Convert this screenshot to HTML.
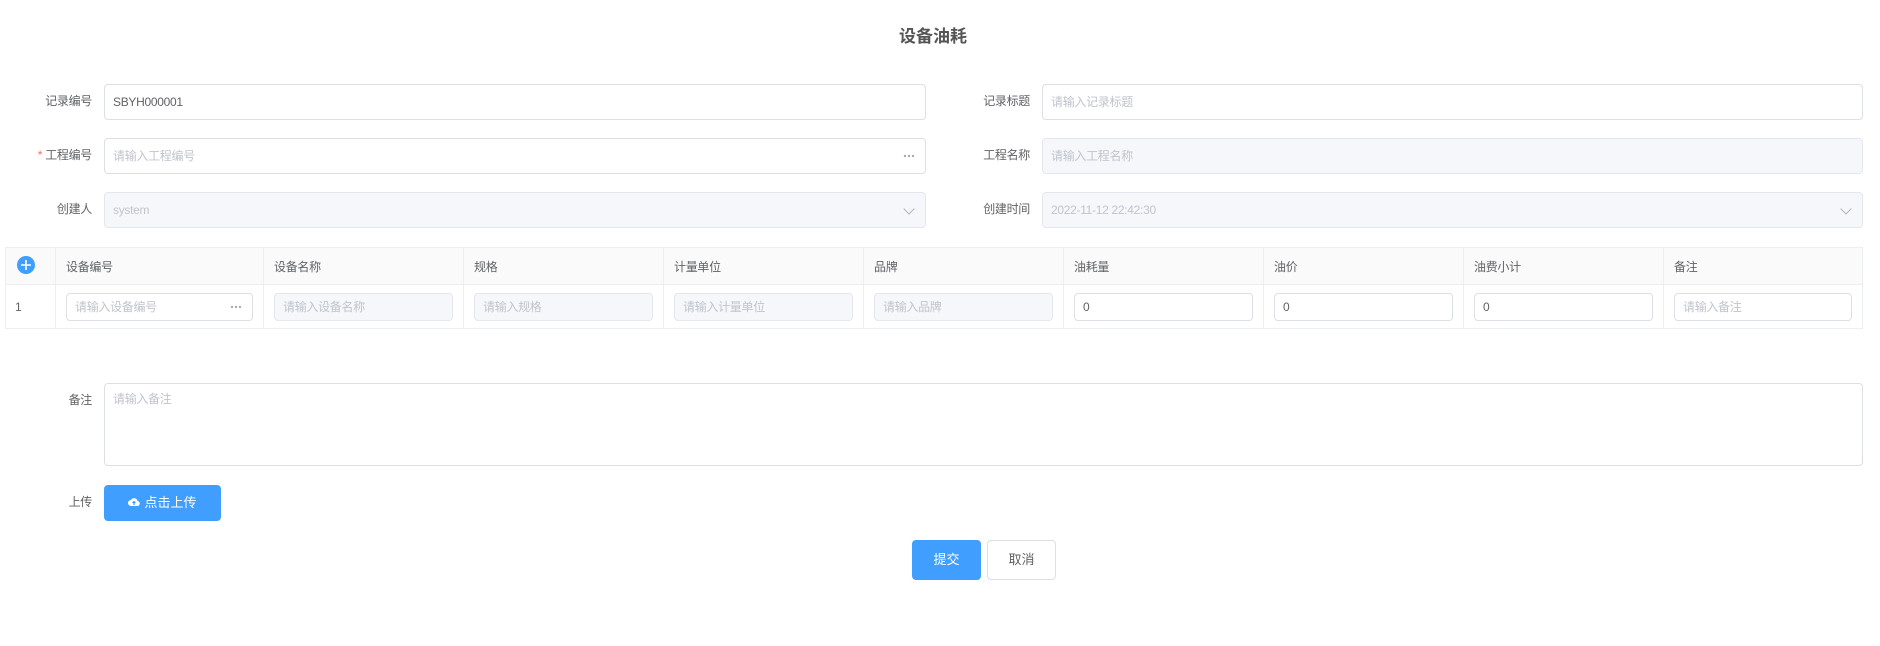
<!DOCTYPE html>
<html><head><meta charset="utf-8"><style>
*{box-sizing:border-box;margin:0;padding:0}
body{width:1880px;height:646px;background:#fff;font-family:"Liberation Sans","Noto Sans CJK SC",sans-serif;color:#606266;position:relative;overflow:hidden;font-size:12px}
.a{position:absolute}
.title{left:0;width:1866px;top:22px;text-align:center;font-size:17px;font-weight:bold;color:#555}
.lbl{text-align:right;width:90px;line-height:35px;font-size:12px;color:#606266;letter-spacing:-0.3px}
.inp{border:1px solid #dcdfe6;border-radius:4px;height:36px;line-height:34px;padding-left:8px;font-size:12px;color:#606266;background:#fff;letter-spacing:-0.3px}
.ph{color:#c0c4cc}
.dis{background:#f5f7fa;border-color:#e4e7ed;color:#c0c4cc}
.dots{position:absolute;right:10px;top:50%;margin-top:-2px;width:12px;height:4px}
.chev{position:absolute;right:12px;top:12px;width:8px;height:8px;border-right:1px solid #b0b3b8;border-bottom:1px solid #b0b3b8;transform:rotate(45deg)}
table{position:absolute;left:5px;top:247px;border-collapse:collapse;table-layout:fixed}
td,th{border:1px solid #ebeef5;font-weight:normal;text-align:left;font-size:12px;color:#606266;letter-spacing:-0.3px}
th{height:37px;background:#fafafa;padding-left:10px}
td{height:44px;padding:0 10px}
.ci{position:relative;height:28px;line-height:26px;border:1px solid #dcdfe6;border-radius:4px;padding-left:8px;background:#fff;font-size:12px}
.ci.dis{background:#f5f7fa;border-color:#e4e7ed}
.btn{border-radius:4px;text-align:center;font-size:13px}
</style></head><body>
<div class="a title">设备油耗</div>

<div class="a lbl" style="left:2px;top:84px">记录编号</div>
<div class="a inp" style="left:104px;top:84px;width:822px">SBYH000001</div>
<div class="a lbl" style="left:2px;top:138px"><span style="color:#f56c6c">*</span> 工程编号</div>
<div class="a inp" style="left:104px;top:138px;width:822px"><span class="ph">请输入工程编号</span><svg class="dots" viewBox="0 0 12 4"><circle cx="2" cy="2" r="1.2" fill="#a8abb2"/><circle cx="6" cy="2" r="1.2" fill="#a8abb2"/><circle cx="10" cy="2" r="1.2" fill="#a8abb2"/></svg></div>
<div class="a lbl" style="left:2px;top:192px">创建人</div>
<div class="a inp dis" style="left:104px;top:192px;width:822px">system<span class="chev"></span></div>

<div class="a lbl" style="left:940px;top:84px">记录标题</div>
<div class="a inp" style="left:1042px;top:84px;width:821px"><span class="ph">请输入记录标题</span></div>
<div class="a lbl" style="left:940px;top:138px">工程名称</div>
<div class="a inp dis" style="left:1042px;top:138px;width:821px">请输入工程名称</div>
<div class="a lbl" style="left:940px;top:192px">创建时间</div>
<div class="a inp dis" style="left:1042px;top:192px;width:821px">2022-11-12 22:42:30<span class="chev"></span></div>

<table>
<colgroup><col style="width:50px"><col style="width:208px"><col style="width:200px"><col style="width:200px"><col style="width:200px"><col style="width:200px"><col style="width:200px"><col style="width:200px"><col style="width:200px"><col style="width:199px"></colgroup>
<tr><th style="padding-left:10px"><svg width="20" height="20" viewBox="0 0 20 20"><circle cx="10" cy="10" r="9" fill="#409eff"/><path d="M10 5v10M5 10h10" stroke="#fff" stroke-width="1.6"/></svg></th><th>设备编号</th><th>设备名称</th><th>规格</th><th>计量单位</th><th>品牌</th><th>油耗量</th><th>油价</th><th>油费小计</th><th>备注</th></tr>
<tr><td style="padding-left:9px">1</td>
<td><div class="ci ph">请输入设备编号<svg class="dots" viewBox="0 0 12 4"><circle cx="2" cy="2" r="1.2" fill="#a8abb2"/><circle cx="6" cy="2" r="1.2" fill="#a8abb2"/><circle cx="10" cy="2" r="1.2" fill="#a8abb2"/></svg></div></td>
<td><div class="ci dis ph">请输入设备名称</div></td>
<td><div class="ci dis ph">请输入规格</div></td>
<td><div class="ci dis ph">请输入计量单位</div></td>
<td><div class="ci dis ph">请输入品牌</div></td>
<td><div class="ci">0</div></td>
<td><div class="ci">0</div></td>
<td><div class="ci">0</div></td>
<td><div class="ci ph">请输入备注</div></td></tr>
</table>

<div class="a lbl" style="left:2px;top:383px">备注</div>
<div class="a" style="left:104px;top:383px;width:1759px;height:83px;border:1px solid #dcdfe6;border-radius:4px;padding:6px 8px;color:#c0c4cc;letter-spacing:-0.3px">请输入备注</div>
<div class="a lbl" style="left:2px;top:485px">上传</div>
<div class="a btn" style="left:104px;top:485px;width:117px;height:36px;line-height:36px;background:#409eff;color:#fff;font-size:13px"><svg width="12" height="12" viewBox="0 0 12 12" style="vertical-align:-1px;margin-right:4px"><path d="M3 10a3 3 0 0 1 0-6 3.5 3.5 0 0 1 6.5 1A2.5 2.5 0 0 1 9 10z" fill="#fff"/><path d="M6 9V5.5M4.5 7L6 5.5 7.5 7" stroke="#409eff" stroke-width="1.2" fill="none"/></svg>点击上传</div>
<div class="a btn" style="left:912px;top:540px;width:69px;height:40px;line-height:40px;background:#409eff;color:#fff">提交</div>
<div class="a btn" style="left:987px;top:540px;width:69px;height:40px;line-height:38px;border:1px solid #dcdfe6;color:#606266">取消</div>
</body></html>
